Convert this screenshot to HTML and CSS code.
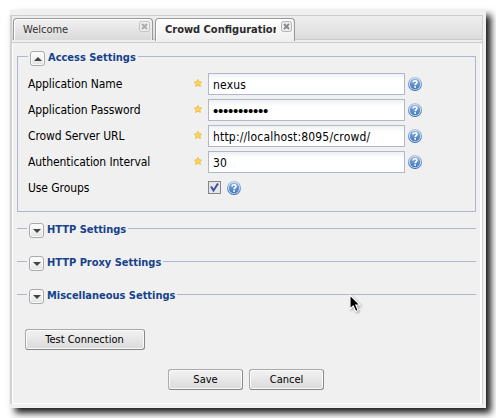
FILE: index.html
```html
<!DOCTYPE html>
<html lang="en">
<head>
<meta charset="utf-8">
<title>Crowd Configuration</title>
<link rel="stylesheet" href="styles.css">
</head>
<body>
<svg class="defs" width="0" height="0" aria-hidden="true">
  <defs>
    <linearGradient id="blue" x1="0" y1="0" x2="0" y2="1"><stop offset="0" stop-color="#8aaedb"/><stop offset="1" stop-color="#3e78bb"/></linearGradient>
    <linearGradient id="rim" x1="0" y1="0" x2="0" y2="1"><stop offset="0" stop-color="#b4c9e6"/><stop offset="1" stop-color="#3569ad"/></linearGradient>
    <symbol id="help" viewBox="0 0 14 14"><circle cx="7" cy="7" r="7" fill="url(#rim)"/><circle cx="7" cy="7" r="6" fill="#dbe7f5"/><circle cx="7" cy="7" r="5.2" fill="url(#blue)"/><path d="M5 5.5C5 3.1 9 3.1 9 5.3C9 6.8 7.1 6.7 7.1 8.3" fill="none" stroke="#fff" stroke-width="1.6"/><rect x="6.2" y="9.2" width="1.8" height="1.6" fill="#fff"/></symbol>
    <symbol id="star" viewBox="0 0 8 8"><path d="M4 .4L5.1 2.7L7.7 3L5.9 4.8L6.4 7.5L4 6.2L1.6 7.5L2.1 4.8L.3 3L2.9 2.7Z" fill="#fbd65a" stroke="#eebc48" stroke-width=".9"/></symbol>
    <symbol id="close" viewBox="0 0 11 11"><rect x=".5" y=".5" width="10" height="10" rx="2" fill="#eee" stroke="currentColor" stroke-opacity=".6"/><path d="M3 3L8 8M8 3L3 8" stroke="currentColor" stroke-width="1.9"/></symbol>
  </defs>
</svg>
<main class="window">
  <div class="panel">
    <nav class="tabs">
      <div class="tab"><span class="tab-text">Welcome</span><svg class="close"><use href="#close"/></svg></div>
      <div class="tab active"><span class="tab-text">Crowd Configuration</span><svg class="close"><use href="#close"/></svg></div>
    </nav>
    <div class="content">
      <section class="group">
        <header class="legend first"><i class="rule lead"></i><span class="toggle up"></span><h2>Access Settings</h2><i class="rule"></i></header>
        <div class="fields">
          <div class="row"><label>Application Name</label><svg class="star"><use href="#star"/></svg><div class="input">nexus</div><svg class="help"><use href="#help"/></svg></div>
          <div class="row"><label>Application Password</label><svg class="star"><use href="#star"/></svg><div class="input dots">•••••••••••</div><svg class="help"><use href="#help"/></svg></div>
          <div class="row"><label>Crowd Server URL</label><svg class="star"><use href="#star"/></svg><div class="input">http://localhost:8095/crowd/</div><svg class="help"><use href="#help"/></svg></div>
          <div class="row"><label>Authentication Interval</label><svg class="star"><use href="#star"/></svg><div class="input">30</div><svg class="help"><use href="#help"/></svg></div>
          <div class="row check-row"><label>Use Groups</label><span class="check"><svg viewBox="0 0 11 11"><path d="M2 4.5L4.5 8.5L9 1.5" fill="none" stroke="#405297" stroke-width="2"/></svg></span><svg class="help"><use href="#help"/></svg></div>
        </div>
      </section>
      <header class="legend"><i class="rule lead"></i><span class="toggle"></span><h2>HTTP Settings</h2><i class="rule"></i></header>
      <header class="legend"><i class="rule lead"></i><span class="toggle"></span><h2>HTTP Proxy Settings</h2><i class="rule"></i></header>
      <header class="legend"><i class="rule lead"></i><span class="toggle"></span><h2>Miscellaneous Settings</h2><i class="rule"></i></header>
      <div class="button test">Test Connection</div>
      <footer class="actions"><div class="button">Save</div><div class="button">Cancel</div></footer>
    </div>
  </div>
</main>
<svg class="cursor" viewBox="0 0 14 20"><path d="M1 1V15L4.2 12L6.8 17.6L9.2 16.5L6.8 11H11Z" fill="#000" stroke="#fff" stroke-width="1.1"/></svg>
</body>
</html>
```
FILE: styles.css
```css
* { box-sizing: border-box; }
html, body { margin: 0; width: 496px; height: 418px; overflow: hidden; background: #fff; }
body { padding: 10px; font: 12px/16px "DejaVu Sans Condensed", "DejaVu Sans", sans-serif; font-stretch: condensed; color: #000; }
.defs { position: absolute; }
.window { width: 476px; height: 398px; padding: 5px 3px 4px 0; background: #f0f0f0; box-shadow: 5px 5px 7px 0 rgba(0,0,0,.9); }
.panel { height: 389px; border: 1px solid #ccc; border-left: 2px solid #d2d2d2; border-right-color: #d0d0d0; }
.tabs { height: 27px; padding: 2px 1px 0; display: flex; gap: 2px; background: linear-gradient(#eee, #dcdcdc 23px, #c9c9c9 23px, #c9c9c9 24px, #eee 24px, #eee 26px, #ccc 26px); }
.tab { width: 140px; height: 22px; display: flex; justify-content: space-between; border: 1px solid #999; border-bottom: 0; border-radius: 4px 4px 0 0; padding: 2px 2px 0 9px; background: linear-gradient(#f1f1f1, #dadada); box-shadow: inset 1px 1px #fff, inset -1px 0 #eee; font-size: 11px; line-height: 17px; color: #333; }
.tab-text { overflow: hidden; white-space: nowrap; width: 111px; }
.active { height: 23px; background: linear-gradient(#fff, #eee); font-weight: bold; color: #2b2b2b; }
.close { width: 11px; height: 11px; flex: none; color: #aaa; }
.active .close { color: #888; }
.content { height: 360px; padding: 7px 4px 0 4px; border: solid #fff; border-width: 0 2px 1px 1px; margin-top: 1px; }
.group { height: 161px; margin-bottom: 11px; }
.legend { height: 16px; margin-bottom: 17px; display: flex; align-items: flex-start; }
.legend.first { margin: 0; }
.rule { height: 1px; flex: 1; margin-top: 5px; background: #b2b5ce; }
.lead { flex: 0 0 10px; margin-right: 2px; }
.first .lead { flex-basis: 11px; }
.toggle { width: 15px; height: 15px; border: 1px solid #aaa; border-radius: 3px; background: linear-gradient(#fff, #e2e2e2); display: flex; align-items: center; justify-content: center; flex: none; box-shadow: inset 0 0 0 1px #fafafa; }
.toggle::after { content: ""; border: 4px solid transparent; border-top-color: #444; border-bottom: 0; margin-top: 1px; }
.toggle.up::after { border: 4px solid transparent; border-bottom-color: #444; border-top: 0; margin-top: 0; }
h2 { margin: -1px 2px 0 3px; font: bold 11px/16px "DejaVu Sans Condensed", "DejaVu Sans", sans-serif; font-stretch: condensed; letter-spacing: -.02px; color: #15428b; white-space: nowrap; }
.fields { margin-top: -11px; height: 156px; border: 1px solid #b2b5ce; border-top: 0; padding: 17px 0 0 10px; }
.row { display: flex; height: 22px; margin-bottom: 4px; }
label { width: 166px; padding-top: 3px; white-space: nowrap; letter-spacing: -.08px; }
.star { width: 8px; height: 8px; margin: 6px 6px 0 0; }
.input { width: 197px; height: 22px; padding: 3px 4px; border: 1px solid #b2b5ce; background: linear-gradient(#eef1f1, #fff 6px); letter-spacing: .18px; }
.dots { font-family: "Liberation Sans", sans-serif; font-size: 15px; letter-spacing: -.25px; }
.help { width: 14px; height: 14px; margin: 4px 0 0 3px; }
.check-row label { width: 180px; }
.check { width: 13px; height: 13px; margin-top: 4px; border: 1px solid #858585; background: #e5e5eb; }
.check svg { display: block; width: 11px; height: 11px; }
.check-row .help { margin-left: 6px; }
.button { width: 75px; height: 21px; display: flex; justify-content: center; border: 1px solid #999; border-color: #aaa #888 #888 #aaa; border-radius: 3px; background: linear-gradient(#f3f3f3, #dadada); box-shadow: inset 0 0 0 1px #fafafa; font-size: 11px; line-height: 19px; }
.test { width: 120px; margin: 24px 0 19px 8px; padding-right: 1px; }
.actions { display: flex; gap: 6px; padding-left: 151px; }
.cursor { position: absolute; left: 349px; top: 294px; width: 14px; height: 20px; filter: drop-shadow(1px 1px 1px rgba(0,0,0,.35)); }
```
